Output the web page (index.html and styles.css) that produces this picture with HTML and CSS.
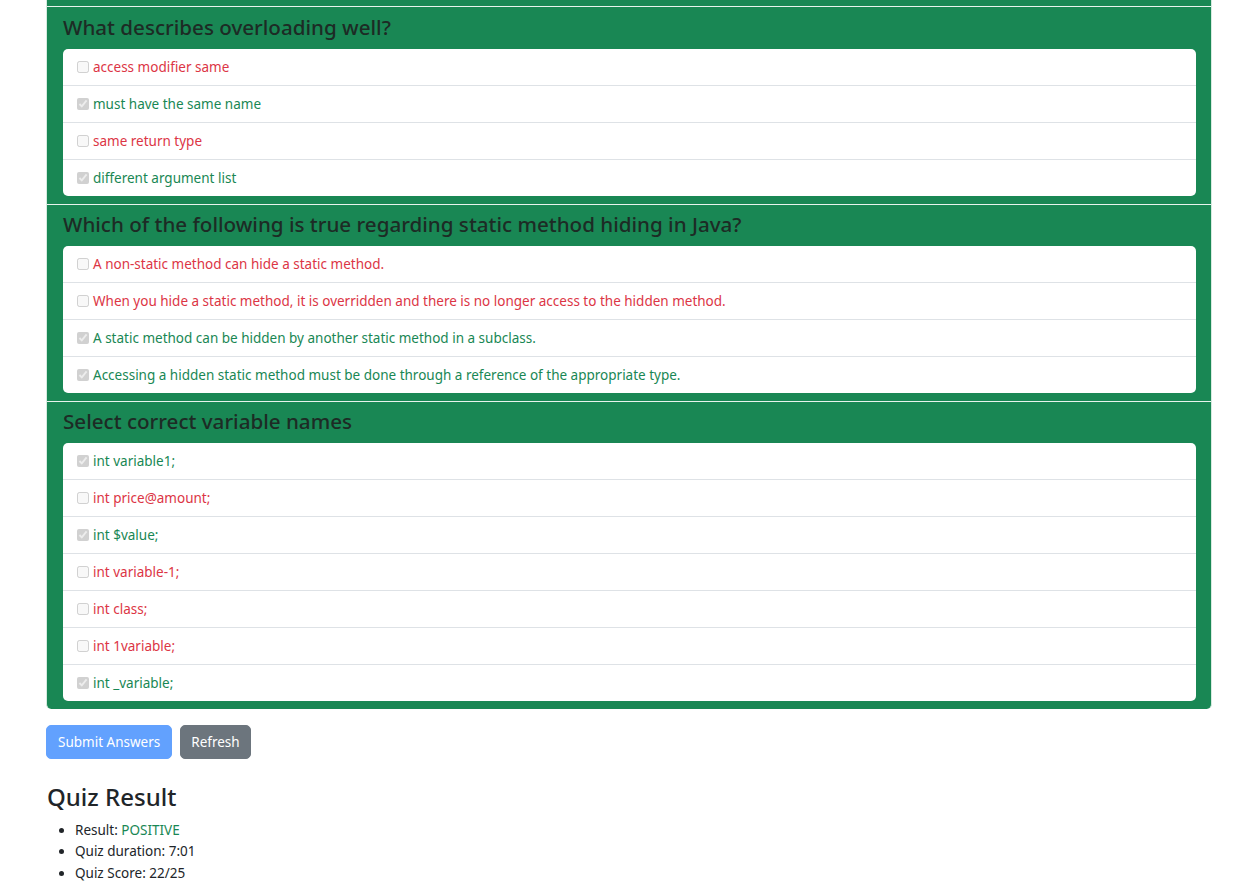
FILE: index.html
```html
<!DOCTYPE html>
<html lang="en">
<head>
<meta charset="utf-8">
<title>Quiz</title>
<link rel="stylesheet" href="styles.css">
</head>
<body>
<div class="container">
  <div class="quiz-card">
    <div class="prev-tail"></div>

    <section class="question">
      <h4 class="q-title">What describes overloading well?</h4>
      <ul class="answers">
        <li class="answer wrong"><input type="checkbox" disabled><span>access modifier same</span></li>
        <li class="answer right"><input type="checkbox" disabled checked><span>must have the same name</span></li>
        <li class="answer wrong"><input type="checkbox" disabled><span>same return type</span></li>
        <li class="answer right"><input type="checkbox" disabled checked><span>different argument list</span></li>
      </ul>
    </section>

    <section class="question">
      <h4 class="q-title">Which of the following is true regarding static method hiding in Java?</h4>
      <ul class="answers">
        <li class="answer wrong"><input type="checkbox" disabled><span>A non-static method can hide a static method.</span></li>
        <li class="answer wrong"><input type="checkbox" disabled><span>When you hide a static method, it is overridden and there is no longer access to the hidden method.</span></li>
        <li class="answer right"><input type="checkbox" disabled checked><span>A static method can be hidden by another static method in a subclass.</span></li>
        <li class="answer right"><input type="checkbox" disabled checked><span>Accessing a hidden static method must be done through a reference of the appropriate type.</span></li>
      </ul>
    </section>

    <section class="question last">
      <h4 class="q-title">Select correct variable names</h4>
      <ul class="answers">
        <li class="answer right"><input type="checkbox" disabled checked><span>int variable1;</span></li>
        <li class="answer wrong"><input type="checkbox" disabled><span>int price@amount;</span></li>
        <li class="answer right"><input type="checkbox" disabled checked><span>int $value;</span></li>
        <li class="answer wrong"><input type="checkbox" disabled><span>int variable-1;</span></li>
        <li class="answer wrong"><input type="checkbox" disabled><span>int class;</span></li>
        <li class="answer wrong"><input type="checkbox" disabled><span>int 1variable;</span></li>
        <li class="answer right"><input type="checkbox" disabled checked><span>int _variable;</span></li>
      </ul>
    </section>
  </div>

  <div class="actions">
    <button class="btn btn-primary" disabled>Submit Answers</button>
    <button class="btn btn-secondary">Refresh</button>
  </div>

  <h3 class="result-title">Quiz Result</h3>
  <ul class="result-list">
    <li>Result: <span class="positive">POSITIVE</span></li>
    <li>Quiz duration: 7:01</li>
    <li>Quiz Score: 22/25</li>
  </ul>
</div>
</body>
</html>
```

FILE: styles.css
```css
* { box-sizing: border-box; }

body {
  margin: 0;
  background: #fff;
  color: #212529;
  font-family: "Noto Sans", "Open Sans", sans-serif;
  font-size: 13.5px;
  line-height: 1.5;
}

.container {
  width: 1166px;
  margin: 0 0 0 46px;
}

.quiz-card {
  background: #198754;
  border-left: 1px solid #d6ebe0;
  border-right: 1px solid #d6ebe0;
  border-radius: 0 0 5px 5px;
}

.prev-tail {
  height: 6px;
}

.question {
  border-top: 1px solid #e8f3ed;
  padding: 7px 15px 8px 15px;
}

.question + .question {
  padding-top: 6px;
}

.q-title {
  margin: 0 0 9px 0;
  padding-left: 1px;
  font-size: 20.6px;
  font-weight: 500;
  line-height: 26px;
  color: #1d2b25;
}

.answers {
  list-style: none;
  margin: 0 0 0 1px;
  padding: 0;
  background: #fff;
  border-radius: 5px;
  overflow: hidden;
}

.answer {
  display: flex;
  align-items: center;
  height: 37px;
  padding: 0 14px;
  border-top: 1px solid #dee2e6;
}

.answer:first-child {
  border-top: none;
  height: 36px;
}

.answer input {
  width: 12px;
  height: 12px;
  margin: 0 4px 0 0;
}

.answer.wrong { color: #dc3545; }
.answer.right { color: #198754; }

.actions {
  display: flex;
  gap: 8px;
  margin-top: 16px;
}

.btn {
  font-family: inherit;
  font-size: 13.5px;
  line-height: 1.5;
  padding: 5px 11px;
  border-radius: 5px;
  border: 1px solid transparent;
  color: #fff;
  height: 34px;
}

.btn-secondary {
  padding: 5px 10px;
}

.btn-primary {
  background: #62a1fe;
  border-color: #62a1fe;
}

.btn-secondary {
  background: #6c757d;
  border-color: #6c757d;
}

.result-title {
  margin: 24px 0 8px 1px;
  font-size: 24px;
  font-weight: 500;
  line-height: 1.2;
}

.result-list {
  margin: 0;
  padding-left: 29px;
  line-height: 21.6px;
}

.positive { color: #198754; }
```
